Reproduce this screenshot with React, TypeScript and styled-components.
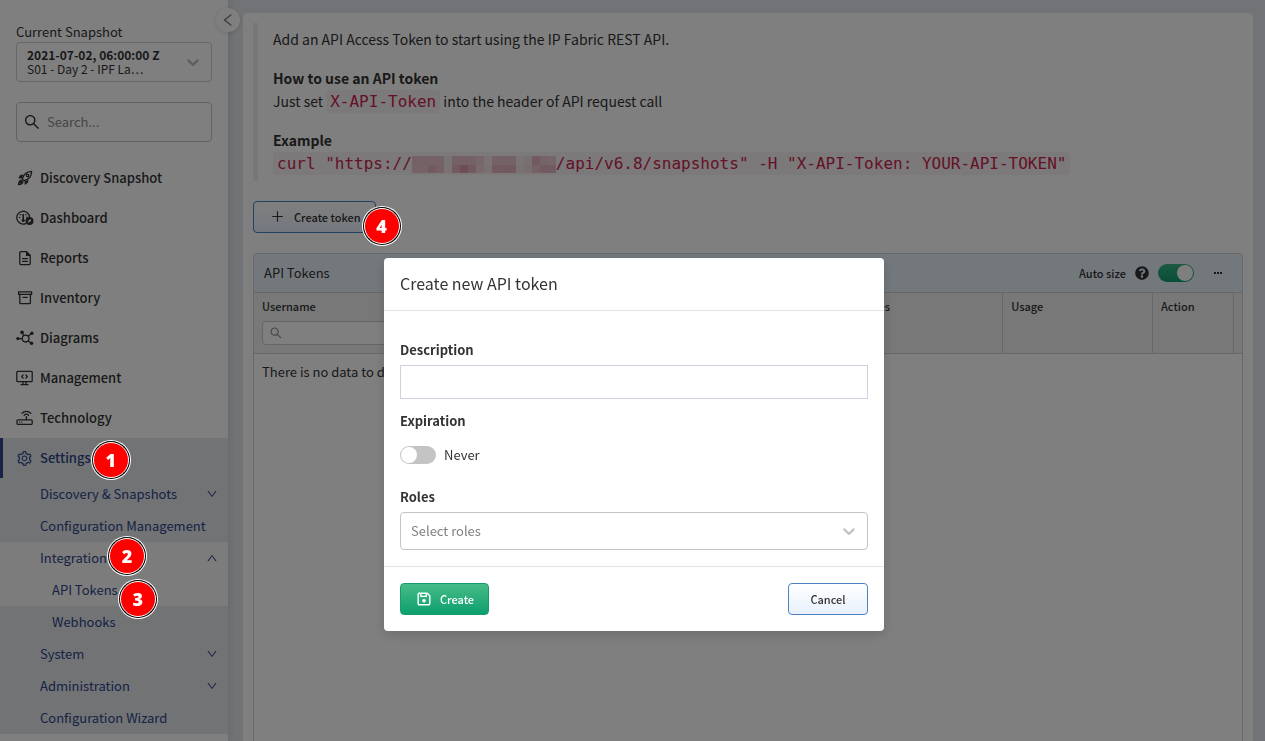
import React from "react";
import styled, { createGlobalStyle, css } from "styled-components";
import {
  AiOutlineDown,
  AiOutlineLeft,
  AiOutlinePlus,
  AiOutlineSearch,
  AiOutlineSetting,
  AiOutlineUp,
} from "react-icons/ai";
import { FaQuestionCircle } from "react-icons/fa";

const uiFont = '"Noto Sans CJK SC", "Noto Sans", sans-serif';
const ink = "#333333";
const navy = "#2f4488";

const GlobalStyle = createGlobalStyle`
  *, *::before, *::after { box-sizing: border-box; }
  html, body, #root { height: 100%; }
  body {
    margin: 0;
    overflow: hidden;
    background: #e4e7ed;
    color: ${ink};
    font: 13px/20px ${uiFont};
  }
  button, input, select { font: inherit; color: inherit; margin: 0; }
  h1, h2, h3, p, ul { margin: 0; padding: 0; font-size: inherit; }
  ul { list-style: none; }
  a { color: inherit; text-decoration: none; }
`;

const Shell = styled.div`
  display: flex;
  height: 100vh;
  overflow: hidden;
`;

/* ---------- sidebar ---------- */

const Sidebar = styled.aside`
  position: relative;
  flex: 0 0 228px;
  background: #ffffff;
  box-shadow: 0 0 8px rgba(40, 55, 90, 0.18);
`;

const CollapseButton = styled.button`
  position: absolute;
  top: 8px;
  right: -12px;
  display: grid;
  place-items: center;
  width: 24px;
  height: 24px;
  padding: 0;
  border: 0;
  border-radius: 50%;
  background: #ffffff;
  color: #777777;
  box-shadow: 0 1px 4px rgba(0, 0, 0, 0.15);
`;

const SidebarTop = styled.div`
  display: flex;
  flex-direction: column;
  padding: 22px 16px 16px;
`;

const SnapshotBox = styled.div`
  position: relative;
  display: flex;
  align-items: center;
  justify-content: space-between;
  height: 40px;
  margin-bottom: 20px;
  padding: 0 8px 0 10px;
  border: 1px solid #cccccc;
  border-radius: 4px;
  line-height: 14px;
  color: #bbbbbb;
`;

const SnapshotText = styled.div`
  display: flex;
  flex-direction: column;
  font-size: 12px;
  color: ${ink};
`;

const OverlaySelect = styled.select`
  position: absolute;
  inset: 0;
  width: 100%;
  opacity: 0;
`;

const SearchBox = styled.label`
  display: flex;
  align-items: center;
  gap: 6px;
  height: 40px;
  padding: 0 6px;
  border: 1px solid #c4c4c4;
  border-radius: 4px;
`;

const BareInput = styled.input`
  flex: 1;
  width: 100%;
  min-width: 0;
  padding: 0;
  border: 0;
  outline: 0;
  background: transparent;
  &::placeholder { color: #8c8c8c; opacity: 1; }
`;

const NavLink = styled.a<{ $active?: boolean }>`
  display: flex;
  align-items: center;
  gap: 7px;
  height: 40px;
  padding-left: 13px;
  border-left: 3px solid transparent;
  font-weight: 500;
  ${(p) =>
    p.$active &&
    css`
      border-left-color: ${navy};
      background: #e3e7eb;
      color: ${navy};
    `}
`;

const NavIcon = styled.span`
  display: grid;
  place-items: center;
  width: 17px;
  height: 18px;
`;

const Submenu = styled.ul`
  background: #e3e7eb;
  color: ${navy};
`;

const SubGroup = styled.li<{ $open?: boolean }>`
  background: ${(p) => (p.$open ? "#f8f8f8" : "transparent")};
`;

const SubLink = styled.a<{ $nested?: boolean }>`
  display: flex;
  align-items: center;
  justify-content: space-between;
  height: 32px;
  padding: 0 10px 0 ${(p) => (p.$nested ? 52 : 40)}px;
`;

/* ---------- numbered markers ---------- */

const Anchor = styled.span`
  position: relative;
`;

const Badge = styled.span<{ $x: number; $y: number }>`
  position: absolute;
  z-index: 20;
  left: calc(100% + ${(p) => p.$x}px);
  top: calc(50% + ${(p) => p.$y}px);
  display: grid;
  place-items: center;
  width: 36px;
  height: 36px;
  margin-top: -18px;
  border: 1px solid #ffffff;
  border-radius: 50%;
  background: #ff0000;
  box-shadow: 0 0 0 1px #000000, 0 0 0 2px #ffffff;
  color: #ffffff;
  font: 800 18px/20px "Open Sans", "Noto Sans", sans-serif;
`;

/* ---------- page ---------- */

const Main = styled.main`
  display: flex;
  flex: 1;
  min-width: 0;
  padding: 13px 12px 0 15px;
`;

const Card = styled.div`
  display: flex;
  flex: 1;
  flex-direction: column;
  min-width: 0;
  padding: 10px 10px 0;
  border-radius: 4px 4px 0 0;
  background: #ffffff;
`;

const Intro = styled.section`
  display: flex;
  flex-direction: column;
  gap: 16px;
  margin-bottom: 20px;
  padding: 5px 0 6px 15px;
  border-left: 5px solid #eeeeee;
  font-size: 14px;
  line-height: 23px;
`;

const Code = styled.code`
  padding: 2px 4px;
  border-radius: 4px;
  background: #f9f2f4;
  color: #c7254e;
  font: 16px/19px "DejaVu Sans Mono", monospace;
`;

const Mosaic = styled.svg`
  width: 144px;
  height: 17px;
  vertical-align: -4px;
`;

const ButtonRow = styled.div`
  display: flex;
`;

const Button = styled.button<{ $kind?: "primary" }>`
  display: inline-flex;
  align-items: center;
  justify-content: center;
  gap: 9px;
  min-width: 80px;
  height: 32px;
  padding: 0 14px 1px;
  border: 1px solid #4a82c3;
  border-radius: 4px;
  background: linear-gradient(#ffffff, #e8f1fd);
  font-size: 11px;
  font-weight: 500;
  > svg { margin-left: 2px; }
  ${(p) =>
    p.$kind === "primary" &&
    css`
      border-color: #159d6c;
      background: linear-gradient(#46bc88, #0e9f6e);
      color: #ffffff;
    `}
`;

const Panel = styled.section`
  flex: 1;
  margin-top: 20px;
  border: 1px solid #cfd2d6;
  border-bottom: 0;
  border-radius: 4px 4px 0 0;
`;

const PanelHeader = styled.header`
  display: flex;
  align-items: center;
  justify-content: space-between;
  height: 38px;
  padding: 0 16px 0 10px;
  border-radius: 3px 3px 0 0;
  background: #e6f0f8;
`;

const PanelTitle = styled.h2`
  font-weight: 400;
`;

const PanelTools = styled.div`
  display: flex;
  align-items: center;
  gap: 9px;
  font-size: 11px;
  font-weight: 500;
`;

const IconButton = styled.button`
  display: grid;
  place-items: center;
  margin-left: 7px;
  padding: 0;
  border: 0;
  background: none;
`;

const Switch = styled.input`
  display: grid;
  align-items: center;
  width: 36px;
  height: 18px;
  padding: 1px;
  border-radius: 9px;
  appearance: none;
  background: #c4c4c4;
  &::before {
    content: "";
    width: 16px;
    height: 16px;
    border-radius: 50%;
    background: #ffffff;
  }
  &:checked {
    background: linear-gradient(#3cb383, #0e9f6e);
    justify-content: end;
  }
`;

const Table = styled.table`
  width: 100%;
  border-collapse: separate;
  border-spacing: 0;
  table-layout: fixed;
`;

const HeadCell = styled.th<{ $width?: number }>`
  width: ${(p) => (p.$width ? `${p.$width}px` : "auto")};
  height: 62px;
  padding: 3px 8px;
  border: solid #cfcfcf;
  border-width: 1px 1px 1px 0;
  background: #f1f1f1;
  font-size: 11px;
  font-weight: 500;
  text-align: left;
  vertical-align: top;
  &:last-child { padding: 0; border-right: 0; }
`;

const FilterBox = styled.label`
  display: flex;
  align-items: center;
  gap: 6px;
  height: 24px;
  margin-top: 5px;
  padding: 0 6px;
  border: 1px solid #cccccc;
  border-radius: 4px;
  background: #ffffff;
  color: #888888;
`;

const EmptyCell = styled.td`
  padding: 8px;
`;

/* ---------- dialog ---------- */

const Overlay = styled.div`
  position: fixed;
  inset: 0;
  z-index: 10;
  display: flex;
  align-items: flex-start;
  justify-content: center;
  padding: 258px 0 0 3px;
  background: rgba(0, 0, 0, 0.5);
`;

const Dialog = styled.form`
  width: 500px;
  border-radius: 4px;
  background: #ffffff;
  box-shadow: 0 4px 12px rgba(0, 0, 0, 0.15);
`;

const DialogTitle = styled.h1`
  padding: 15px 16px 17px;
  border-bottom: 1px solid #e4e4e4;
  font-size: 16px;
  font-weight: 400;
  line-height: 20px;
`;

const DialogBody = styled.div`
  display: flex;
  flex-direction: column;
  gap: 12px;
  padding: 29px 16px 16px;
`;

const Field = styled.div`
  display: flex;
  flex-direction: column;
  gap: 5px;
`;

const FieldLabel = styled.label`
  font-weight: 700;
`;

const TextInput = styled.input`
  height: 34px;
  padding: 0 10px;
  border: 1px solid #ced2de;
  outline: 0;
`;

const SwitchRow = styled.label`
  display: flex;
  align-items: center;
  gap: 8px;
  margin: 9px 0 10px;
`;

const SelectWrap = styled.div`
  display: grid;
  align-items: center;
  color: #c4c4c4;
  > * { grid-area: 1 / 1; }
  > svg { justify-self: end; margin-right: 9px; pointer-events: none; }
`;

const Select = styled.select`
  width: 100%;
  height: 38px;
  padding: 0 10px;
  border: 1px solid #c4c4c4;
  border-radius: 4px;
  appearance: none;
  background: #ffffff;
  color: #808080;
`;

const DialogFooter = styled.footer`
  display: flex;
  justify-content: space-between;
  padding: 16px;
  border-top: 1px solid #e4e4e4;
`;

/* ---------- drawings ---------- */

const SelectChevron = () => (
  <svg width="20" height="20" viewBox="0 0 20 20" fill="currentColor" aria-hidden="true">
    <path d="M4.516 7.548c0.436-0.446 1.043-0.481 1.576 0l3.908 3.747 3.908-3.747c0.533-0.481 1.141-0.446 1.574 0 0.436 0.445 0.408 1.197 0 1.615-0.406 0.418-4.695 4.502-4.695 4.502-0.217 0.223-0.502 0.335-0.787 0.335s-0.57-0.112-0.789-0.335c0 0-4.287-4.084-4.695-4.502s-0.436-1.17 0-1.615z" />
  </svg>
);

const line = { fill: "none", stroke: "currentColor", strokeWidth: 1.3, strokeLinejoin: "round", strokeLinecap: "round" } as const;

const RocketIcon = () => (
  <svg width="16" height="16" viewBox="0 0 16 16" aria-hidden="true">
    <path {...line} d="M5.4 9.2C6.2 5.2 9.2 1.6 14.6 1.4 14.5 6.8 10.8 9.8 6.9 10.7z" />
    <circle cx="10.6" cy="5.4" r="1.2" {...line} />
    <path fill="currentColor" d="M5.8 5.3 6.6 4.4 3.2 5.1 1.2 8.3 5 8.4zM10.7 10.2 11.6 9.4 10.9 12.8 7.7 14.9 7.6 11z" />
    <path {...line} d="M4.2 10.2C2.2 10.4 1.8 12 1.5 14.6 4 14.4 5.6 13.8 5.9 11.9L4.2 10.2z" />
    <circle cx="3.6" cy="12.4" r="0.8" {...line} />
  </svg>
);

const GaugeIcon = () => (
  <svg width="18" height="16" viewBox="0 0 18 16" aria-hidden="true">
    <path {...line} d="M9.6 13.6A6.4 6.4 0 1 1 13.6 7.6" />
    <path {...line} strokeWidth={1.6} d="M7.2 4.5V9" />
    <circle cx="7.2" cy="10.4" r="1.6" fill="currentColor" />
    <circle cx="3.6" cy="7.6" r="0.8" fill="currentColor" />
    <circle cx="4.6" cy="4.8" r="0.8" fill="currentColor" />
    <circle cx="9.9" cy="4.8" r="0.8" fill="currentColor" />
    <circle cx="10.8" cy="7.2" r="0.7" fill="currentColor" />
    <path fill="currentColor" fillRule="evenodd" d="M13.5 6.9a4 4 0 1 1 0 8 4 4 0 0 1 0-8zm1.8 2.2-2.7 1.1-.9 2.6 2.7-1.1z" />
  </svg>
);

const ReportIcon = () => (
  <svg width="16" height="16" viewBox="0 0 16 16" aria-hidden="true">
    <path {...line} d="M9.4 1.6H4A1.2 1.2 0 0 0 2.8 2.8v10.6A1.2 1.2 0 0 0 4 14.6h8a1.2 1.2 0 0 0 1.2-1.2V5.4z" />
    <path fill="currentColor" d="M9 1.4h1L13.5 5v1H9z" />
    <path {...line} d="M5.6 8.6h4.8M5.6 11.4h4.8" />
  </svg>
);

const InventoryIcon = () => (
  <svg width="16" height="16" viewBox="0 0 16 16" aria-hidden="true">
    <path {...line} d="M1.6 1.8h13v2.6h-13zM2.8 4.6v8.2a.9.9 0 0 0 .9.9h8.8a.9.9 0 0 0 .9-.9V4.6M6 7.4h4.2" />
  </svg>
);

const DiagramIcon = () => (
  <svg width="18" height="16" viewBox="0 0 18 16" aria-hidden="true">
    <circle cx="9.6" cy="8.6" r="3.4" {...line} />
    <path {...line} d="M2 8.6h4M6 2.4l1.7 3.2M12.2 6.2l3.6-3M12.2 11l3.2 2.2" />
    <circle cx="1.9" cy="8.6" r="1.7" fill="currentColor" />
    <circle cx="6" cy="2.2" r="1.8" fill="currentColor" />
    <circle cx="15.9" cy="3.2" r="1.7" fill="currentColor" />
    <circle cx="15.6" cy="13.2" r="1.7" fill="currentColor" />
  </svg>
);

const ManagementIcon = () => (
  <svg width="17" height="16" viewBox="0 0 17 16" aria-hidden="true">
    <path {...line} d="M1.7 1.4h13.6a.9.9 0 0 1 .9.9v8.4a.9.9 0 0 1-.9.9H1.7a.9.9 0 0 1-.9-.9V2.3a.9.9 0 0 1 .9-.9zM7 11.8v2.6M10 11.8v2.6M5 14.6h7M7.2 4.9 5.6 6.5l1.6 1.6M9.8 4.9l1.6 1.6-1.6 1.6" />
  </svg>
);

const RouterIcon = () => (
  <svg width="17" height="16" viewBox="0 0 17 16" aria-hidden="true">
    <path {...line} d="M2 9.8h13.2a1 1 0 0 1 1 1v2.6a1 1 0 0 1-1 1H2a1 1 0 0 1-1-1v-2.6a1 1 0 0 1 1-1zM10.4 6.6v3M8.2 5.2a3.2 3.2 0 0 1 4.4 0M6 3.2a6.4 6.4 0 0 1 8.8 0" />
    <circle cx="3.6" cy="12.1" r="0.7" fill="currentColor" />
    <circle cx="5.8" cy="12.1" r="0.7" fill="currentColor" />
  </svg>
);

const SaveIcon = () => (
  <svg width="14" height="14" viewBox="0 0 14 14" aria-hidden="true">
    <path {...line} strokeWidth={1.4} d="M2 1.2h8.2l2.6 2.6v8a1 1 0 0 1-1 1H2.2a1 1 0 0 1-1-1V2.2a1 1 0 0 1 1-1zM3.9 1.4v3h5.4v-3" />
    <circle cx="7" cy="8.8" r="1.8" fill="currentColor" />
  </svg>
);

const MoreIcon = () => (
  <svg width="16" height="16" viewBox="0 0 16 16" fill="currentColor" aria-hidden="true">
    <path d="M4 7h2v2H4zM7 7h2v2H7zM10 7h2v2h-2z" />
  </svg>
);

const mosaicRows = [
  [26, 26, 24, 24, 6, 28, 28, 25, 20, 7, 25, 27, 26, 5, 10, 34, 24, 22],
  [24, 24, 34, 28, 8, 34, 48, 34, 18, 10, 34, 34, 36, 8, 12, 26, 34, 32],
];

const HiddenHost = () => (
  <Mosaic viewBox="0 0 144 17" shapeRendering="crispEdges" role="img" aria-label="hidden host">
    {mosaicRows.map((row, r) =>
      row.map((v, c) => (
        <rect key={`${r}-${c}`} x={c * 8} y={r * 9} width="8" height={r ? 8 : 9} fill="#c0405c" fillOpacity={v / 100} />
      )),
    )}
  </Mosaic>
);

/* ---------- data ---------- */

const navItems = [
  { label: "Discovery Snapshot", icon: <RocketIcon /> },
  { label: "Dashboard", icon: <GaugeIcon /> },
  { label: "Reports", icon: <ReportIcon /> },
  { label: "Inventory", icon: <InventoryIcon /> },
  { label: "Diagrams", icon: <DiagramIcon /> },
  { label: "Management", icon: <ManagementIcon /> },
  { label: "Technology", icon: <RouterIcon /> },
];

const columns = ["Username", "Description", "Token", "Expiration", "Roles", "Usage"];

export default function App() {
  return (
    <>
      <GlobalStyle />
      <Shell>
        <Sidebar>
          <SidebarTop>
            <label htmlFor="snapshot">Current Snapshot</label>
            <SnapshotBox>
              <SnapshotText aria-hidden="true">
                <b>2021-07-02, 06:00:00 Z</b>
                <span>S01 - Day 2 - IPF La…</span>
              </SnapshotText>
              <SelectChevron />
              <OverlaySelect id="snapshot" />
            </SnapshotBox>
            <SearchBox>
              <AiOutlineSearch size={18} />
              <BareInput type="search" placeholder="Search..." aria-label="Search" />
            </SearchBox>
          </SidebarTop>
          <nav>
            {navItems.map((item) => (
              <NavLink href="#" key={item.label}>
                <NavIcon>{item.icon}</NavIcon>
                {item.label}
              </NavLink>
            ))}
            <NavLink href="#" $active>
              <NavIcon><AiOutlineSetting size={17} /></NavIcon>
              <Anchor>
                Settings
                <Badge $x={2} $y={2}>1</Badge>
              </Anchor>
            </NavLink>
            <Submenu>
              <SubGroup>
                <SubLink href="#">Discovery &amp; Snapshots<AiOutlineDown size={12} /></SubLink>
                <SubLink href="#">Configuration Management</SubLink>
              </SubGroup>
              <SubGroup $open>
                <SubLink href="#">
                  <Anchor>
                    Integration
                    <Badge $x={2} $y={-2}>2</Badge>
                  </Anchor>
                  <AiOutlineUp size={12} />
                </SubLink>
                <SubLink href="#" $nested>
                  <Anchor>
                    API Tokens
                    <Badge $x={2} $y={9}>3</Badge>
                  </Anchor>
                </SubLink>
              </SubGroup>
              <SubGroup>
                <SubLink href="#" $nested>Webhooks</SubLink>
                <SubLink href="#">System<AiOutlineDown size={12} /></SubLink>
                <SubLink href="#">Administration<AiOutlineDown size={12} /></SubLink>
                <SubLink href="#">Configuration Wizard</SubLink>
              </SubGroup>
            </Submenu>
          </nav>
          <CollapseButton aria-label="Collapse sidebar"><AiOutlineLeft size={16} /></CollapseButton>
        </Sidebar>

        <Main>
          <Card>
            <Intro>
              <p>Add an API Access Token to start using the IP Fabric REST API.</p>
              <div>
                <h3>How to use an API token</h3>
                <p>Just set <Code>X-API-Token</Code> into the header of API request call</p>
              </div>
              <div>
                <h3>Example</h3>
                <p>
                  <Code>curl "https://<HiddenHost />/api/v6.8/snapshots" -H "X-API-Token: YOUR-API-TOKEN"</Code>
                </p>
              </div>
            </Intro>

            <ButtonRow>
              <Anchor>
                <Button type="button"><AiOutlinePlus size={15} />Create token</Button>
                <Badge $x={-12} $y={9}>4</Badge>
              </Anchor>
            </ButtonRow>

            <Panel>
              <PanelHeader>
                <PanelTitle>API Tokens</PanelTitle>
                <PanelTools>
                  <label htmlFor="auto-size">Auto size</label>
                  <FaQuestionCircle size={14} />
                  <Switch id="auto-size" type="checkbox" role="switch" defaultChecked />
                  <IconButton aria-label="More"><MoreIcon /></IconButton>
                </PanelTools>
              </PanelHeader>
              <Table>
                <thead>
                  <tr>
                    {columns.map((name) => (
                      <HeadCell key={name}>
                        {name}
                        {name === "Username" && (
                          <FilterBox>
                            <AiOutlineSearch size={14} />
                            <BareInput aria-label="Filter by username" />
                          </FilterBox>
                        )}
                      </HeadCell>
                    ))}
                    <HeadCell $width={81}>Action</HeadCell>
                    <HeadCell $width={8} aria-hidden="true" />
                  </tr>
                </thead>
                <tbody>
                  <tr>
                    <EmptyCell colSpan={8}>There is no data to display</EmptyCell>
                  </tr>
                </tbody>
              </Table>
            </Panel>
          </Card>
        </Main>
      </Shell>

      <Overlay>
        <Dialog role="dialog" aria-modal="true" aria-labelledby="dialog-title">
          <DialogTitle id="dialog-title">Create new API token</DialogTitle>
          <DialogBody>
            <Field>
              <FieldLabel htmlFor="description">Description</FieldLabel>
              <TextInput id="description" type="text" />
            </Field>
            <Field>
              <FieldLabel htmlFor="never">Expiration</FieldLabel>
              <SwitchRow>
                <Switch id="never" type="checkbox" role="switch" />
                Never
              </SwitchRow>
            </Field>
            <Field>
              <FieldLabel htmlFor="roles">Roles</FieldLabel>
              <SelectWrap>
                <Select id="roles" defaultValue="">
                  <option value="">Select roles</option>
                </Select>
                <SelectChevron />
              </SelectWrap>
            </Field>
          </DialogBody>
          <DialogFooter>
            <Button type="submit" $kind="primary"><SaveIcon />Create</Button>
            <Button type="button">Cancel</Button>
          </DialogFooter>
        </Dialog>
      </Overlay>
    </>
  );
}
